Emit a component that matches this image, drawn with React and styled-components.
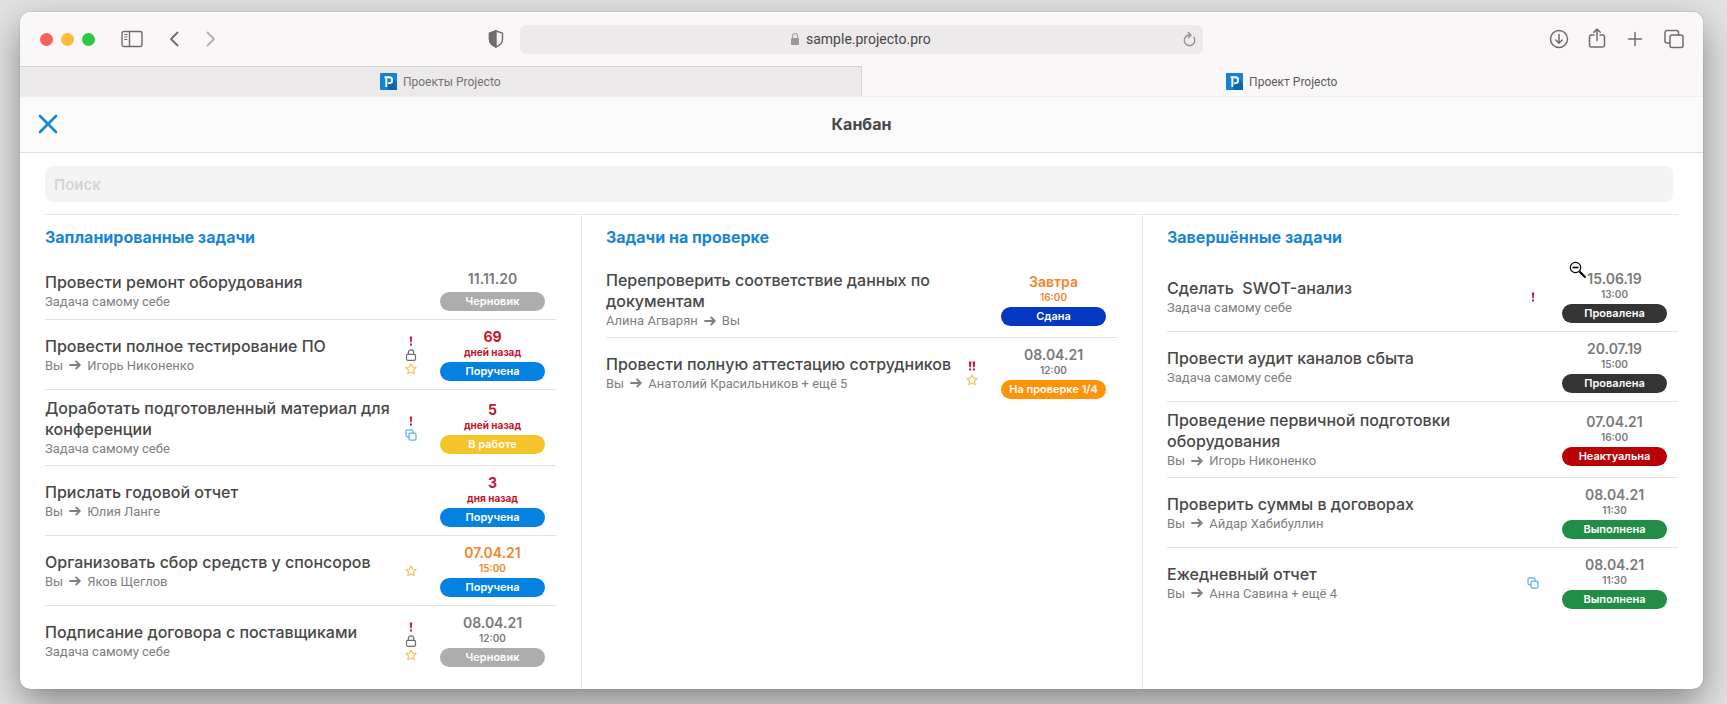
import React from 'react';
import styled, { createGlobalStyle } from 'styled-components';

const GlobalStyle = createGlobalStyle`
  * {
    box-sizing: border-box;
  }

  body {
    margin: 0;
    background-color: #e2e2e2;
    color: #484848;
    font-family: Inter, 'Noto Sans', sans-serif;
  }

  button {
    padding: 0;
    border: none;
    background: none;
    color: inherit;
    font: inherit;
    cursor: pointer;
  }

  svg {
    display: block;
    flex: none;
  }
`;

const Desktop = styled.div`
  display: flex;
  min-height: 100vh;
  padding: 12px 24px 15px 20px;
  overflow: hidden;
`;

const BrowserWindow = styled.div`
  display: flex;
  flex: 1;
  flex-direction: column;
  min-width: 0;
  border-radius: 10px;
  background-color: #fff;
  box-shadow: 0 0 1px rgba(0, 0, 0, 0.4), 0 14px 36px rgba(0, 0, 0, 0.4);
`;

const Toolbar = styled.div`
  display: grid;
  grid-template-columns: 1fr minmax(0, 683px) 1fr;
  align-items: center;
  height: 54px;
  border-radius: 10px 10px 0 0;
  background-color: #faf7f8;
  color: #6e6c6d;
  font-family: Roboto, 'Noto Sans', sans-serif;
`;

const ToolbarLeft = styled.div`
  display: flex;
  align-items: center;
  padding: 0 16px 0 20px;
`;

const TrafficLights = styled.div`
  display: flex;
  gap: 8px;
  margin-right: 26px;
`;

const TrafficLight = styled.button`
  width: 13px;
  height: 13px;
  border-radius: 50%;
  background-color: ${(props) => props.$color};
`;

const NavButtons = styled.div`
  display: flex;
  gap: 19px;
  margin-left: 22px;
`;

const ToolButton = styled.button`
  opacity: ${(props) => (props.disabled ? 0.5 : 1)};
`;

const ShieldButton = styled(ToolButton)`
  margin-left: auto;
`;

const AddressBar = styled.div`
  display: grid;
  grid-template-columns: 1fr auto 1fr;
  align-items: center;
  height: 29px;
  padding: 0 7px;
  border-radius: 6px;
  background-color: #edeaeb;
`;

const Address = styled.label`
  display: flex;
  grid-column: 2;
  align-items: center;
  gap: 6px;
`;

const AddressInput = styled.input`
  width: 127px;
  padding: 0;
  border: none;
  outline: none;
  background: none;
  color: #484647;
  font-family: inherit;
  font-size: 14px;
`;

const ReloadButton = styled(ToolButton)`
  justify-self: end;
  color: #8e8c8d;
`;

const ToolbarRight = styled.div`
  display: flex;
  align-items: center;
  justify-content: flex-end;
  gap: 19px;
  padding-right: 19px;
`;

const TabBar = styled.div`
  display: grid;
  grid-template-columns: 1fr 1fr;
  height: 31px;
  font-family: Roboto, 'Noto Sans', sans-serif;
`;

const Tab = styled.button`
  display: flex;
  align-items: center;
  justify-content: center;
  gap: 6px;
  border-top: 1px solid ${(props) => (props.$active ? '#faf7f8' : '#d3d1d2')};
  border-right: 1px solid ${(props) => (props.$active ? '#faf7f8' : '#d3d1d2')};
  border-bottom: 1px solid #f0eeef;
  background-color: ${(props) => (props.$active ? '#faf7f8' : '#ebe9ea')};
  color: ${(props) => (props.$active ? '#5c5a5b' : '#747273')};
  font-size: 12px;
`;

const PageHeader = styled.header`
  display: grid;
  grid-template-columns: 1fr auto 1fr;
  align-items: center;
  height: 56px;
  padding: 0 18px 2px;
  border-bottom: 1px solid #e0e0e0;
  background-color: #fafafa;
`;

const CloseButton = styled.button`
  justify-self: start;
  color: #1a85d6;
`;

const PageTitle = styled.h1`
  margin: 0;
  font-size: 16px;
  font-weight: 700;
`;

const SearchRow = styled.div`
  margin: 0 25px;
  padding: 13px 5px 12px 0;
  border-bottom: 1px solid #e6e6e6;
`;

const SearchInput = styled.input`
  display: block;
  width: 100%;
  height: 36px;
  padding: 0 9px;
  border: none;
  border-radius: 8px;
  outline: none;
  background-color: #f4f4f4;
  font-family: inherit;
  font-size: 15px;
  font-weight: 600;

  &::placeholder {
    color: #d4d4d4;
    opacity: 1;
  }
`;

const Board = styled.main`
  display: grid;
  flex: 1;
  grid-template-columns: repeat(3, minmax(0, 1fr));
`;

const Column = styled.section`
  padding: 0 25px 12px;

  & + & {
    border-left: 1px solid #e6e6e6;
    padding-left: 24px;
  }
`;

const ColumnTitle = styled.h2`
  margin: 0;
  color: #1a85d6;
  font-size: 16px;
  font-weight: 700;
  line-height: 44px;
`;

const TaskList = styled.ul`
  margin: 3px 0 0;
  padding: 0;
  list-style: none;
`;

const TaskRow = styled.li`
  display: flex;
  align-items: center;
  padding: 8px 11px 8px 0;
  border-bottom: 1px solid #e2e2e2;

  &:last-child {
    border-bottom-color: transparent;
  }
`;

const TaskText = styled.div`
  flex: 1;
  min-width: 0;
`;

const TaskTitle = styled.h3`
  margin: 0;
  font-size: 16px;
  font-weight: 500;
  line-height: 21px;
`;

const TaskPeople = styled.p`
  display: flex;
  align-items: center;
  gap: 6px;
  margin: 0;
  color: #808080;
  font-family: Roboto, 'Noto Sans', sans-serif;
  font-size: 13px;
  line-height: 17px;
`;

const Marks = styled.div`
  display: flex;
  flex-direction: column;
  align-items: center;
  width: 20px;
  margin-right: 19px;
`;

const Due = styled.div`
  display: flex;
  position: relative;
  flex-direction: column;
  align-items: center;
  width: 105px;
  color: ${(props) => props.$color};
`;

const DueDate = styled.span`
  font-size: 14px;
  font-weight: ${(props) => (props.$bold ? 700 : 600)};
  line-height: 18px;
`;

const DueTime = styled.span`
  font-size: 10px;
  font-weight: ${(props) => (props.$bold ? 700 : 600)};
  line-height: 12px;
`;

const Status = styled.span`
  width: 100%;
  margin-top: 4px;
  border-radius: 10px;
  background-color: ${(props) => props.$color};
  color: #fff;
  font-size: 11px;
  font-weight: 600;
  line-height: 19px;
  text-align: center;
`;

const Pointer = styled.div`
  position: absolute;
  top: -9px;
  left: 7px;
`;

const GRAY = '#7a7a7a';
const RED = '#c4152b';
const ORANGE = '#f5842a';

const statuses = {
  draft: ['Черновик', '#adadad'],
  assigned: ['Поручена', '#0482e2'],
  inWork: ['В работе', '#f4c52b'],
  submitted: ['Сдана', '#0437c2'],
  review: ['На проверке 1/4', '#ff9206'],
  failed: ['Провалена', '#343434'],
  outdated: ['Неактуальна', '#b90205'],
  done: ['Выполнена', '#228d46'],
};

const SELF = ['Задача самому себе'];

const columns = [
  {
    title: 'Запланированные задачи',
    tasks: [
      { title: 'Провести ремонт оборудования', people: SELF, marks: [], date: '11.11.20', status: 'draft' },
      { title: 'Провести полное тестирование ПО', people: ['Вы', 'Игорь Никоненко'], marks: ['high', 'lock', 'star'], date: '69', time: 'дней назад', color: RED, status: 'assigned' },
      { title: 'Доработать подготовленный материал для конференции', people: SELF, marks: ['high', 'copy'], date: '5', time: 'дней назад', color: RED, status: 'inWork' },
      { title: 'Прислать годовой отчет', people: ['Вы', 'Юлия Ланге'], marks: [], date: '3', time: 'дня назад', color: RED, status: 'assigned' },
      { title: 'Организовать сбор средств у спонсоров', people: ['Вы', 'Яков Щеглов'], marks: ['star'], date: '07.04.21', time: '15:00', color: ORANGE, status: 'assigned' },
      { title: 'Подписание договора с поставщиками', people: SELF, marks: ['high', 'lock', 'star'], date: '08.04.21', time: '12:00', status: 'draft' },
    ],
  },
  {
    title: 'Задачи на проверке',
    tasks: [
      { title: 'Перепроверить соответствие данных по документам', people: ['Алина Агварян', 'Вы'], marks: [], date: 'Завтра', time: '16:00', color: ORANGE, status: 'submitted' },
      { title: 'Провести полную аттестацию сотрудников', people: ['Вы', 'Анатолий Красильников + ещё 5'], marks: ['urgent', 'star'], date: '08.04.21', time: '12:00', status: 'review' },
    ],
  },
  {
    title: 'Завершённые задачи',
    tasks: [
      { title: 'Сделать \u00a0SWOT-анализ', people: SELF, marks: ['high'], date: '15.06.19', time: '13:00', status: 'failed', pointer: true },
      { title: 'Провести аудит каналов сбыта', people: SELF, marks: [], date: '20.07.19', time: '15:00', status: 'failed' },
      { title: 'Проведение первичной подготовки оборудования', people: ['Вы', 'Игорь Никоненко'], marks: [], date: '07.04.21', time: '16:00', status: 'outdated' },
      { title: 'Проверить суммы в договорах', people: ['Вы', 'Айдар Хабибуллин'], marks: [], date: '08.04.21', time: '11:30', status: 'done' },
      { title: 'Ежедневный отчет', people: ['Вы', 'Анна Савина + ещё 4'], marks: ['copy'], date: '08.04.21', time: '11:30', status: 'done' },
    ],
  },
];

const Icon = ({ width, height, stroke = 1.5, children }) => (
  <svg
    width={width}
    height={height}
    viewBox={`0 0 ${width} ${height}`}
    fill="none"
    stroke="currentColor"
    strokeWidth={stroke}
    strokeLinecap="round"
    strokeLinejoin="round"
    aria-hidden="true"
  >
    {children}
  </svg>
);

const SidebarIcon = () => (
  <Icon width={22} height={18} stroke={1.4}>
    <rect x="1" y="1.5" width="20" height="15" rx="2" />
    <path d="M8.5 1.5v15" />
    <path d="M3.5 4.5h2.5M3.5 7h2.5M3.5 9.5h2.5" strokeWidth="1" />
  </Icon>
);

const ShieldIcon = () => (
  <Icon width={16} height={18} stroke={1.4}>
    <path d="M8 1 14.5 3.2v6.3c0 3.4-3 6-6.5 7.5-3.5-1.5-6.5-4.1-6.5-7.5V3.2z" />
    <path d="M8 1v16C4.5 15.5 1.5 12.9 1.5 9.5V3.2z" fill="currentColor" />
  </Icon>
);

const LockGlyph = () => (
  <svg width="10" height="14" viewBox="0 0 10 14" aria-hidden="true">
    <path d="M2.5 6V4a2.5 2.5 0 0 1 5 0v2" fill="none" stroke="#a19fa0" strokeWidth="1.2" />
    <rect x="1" y="6" width="8" height="7" rx="1" fill="#9a9899" />
  </svg>
);

const ReloadIcon = () => (
  <Icon width={14} height={16} stroke={1.3}>
    <path d="M11.9 6.3A5.3 5.3 0 1 1 7 4h1.5" />
    <path d="M6.3 1.5 9 4 6.3 6.7" />
  </Icon>
);

const DownloadIcon = () => (
  <Icon width={20} height={20}>
    <circle cx="10" cy="10" r="8.5" />
    <path d="M10 5.5v8.5M6.8 11 10 14.2 13.2 11" />
  </Icon>
);

const ShareIcon = () => (
  <Icon width={18} height={22}>
    <path d="M6 7H3.2A1.7 1.7 0 0 0 1.5 8.700v8.600A1.7 1.7 0 0 0 3.2 19h11.600a1.7 1.7 0 0 0 1.7-1.7V8.700A1.7 1.7 0 0 0 14.8 7H12" />
    <path d="M9 12.5V1.300M5.8 4.300 9 1.100l3.2 3.2" />
  </Icon>
);

const PlusIcon = () => (
  <Icon width={20} height={20}>
    <path d="M10 3.5v13M3.5 10h13" />
  </Icon>
);

const TabsIcon = () => (
  <Icon width={20} height={20}>
    <rect x="6" y="6" width="13" height="12.5" rx="2" />
    <path d="M6 14H3a2 2 0 0 1-2-2V3.5a2 2 0 0 1 2-2h9.5a2 2 0 0 1 2 2V6" />
  </Icon>
);

const CloseIcon = () => (
  <Icon width={20} height={20} stroke={2.6}>
    <path d="M2 2 18 18M18 2 2 18" />
  </Icon>
);

const Favicon = () => (
  <svg width="17" height="17" viewBox="0 0 17 17" aria-hidden="true">
    <rect width="17" height="17" rx="1" fill="#1583d2" />
    <path d="M7 14 13 6l4 4v7H8z" fill="#0b66ac" />
    <path d="M6.3 14V4.3M4.5 4.3h4.8a2.9 2.9 0 0 1 0 5.8H8.2" fill="none" stroke="#fff" strokeWidth="1.9" />
  </svg>
);

const ArrowIcon = () => (
  <Icon width={12} height={10} stroke={1.8}>
    <path d="M1 5h9.5M7.2 1.5 10.8 5 7.2 8.5" />
  </Icon>
);

const markIcons = {
  high: (
    <svg width="14" height="14" viewBox="0 0 14 14" role="img" aria-label="Важно">
      <path d="M5.8 2.5h2.4l-.5 5.800H6.300z" fill="#c01f3c" />
      <rect x="6" y="9.500" width="2" height="2" fill="#c01f3c" />
    </svg>
  ),
  urgent: (
    <svg width="14" height="14" viewBox="0 0 14 14" role="img" aria-label="Очень важно">
      <path d="M3.8 2.5h2.6l-.5 5.8H4.3zM7.6 2.5h2.6l-.5 5.8H8.1z" fill="#c01f3c" />
      <path d="M4.1 9.5h2v2h-2zM7.9 9.5h2v2h-2z" fill="#c01f3c" />
    </svg>
  ),
  lock: (
    <svg width="14" height="14" viewBox="0 0 14 14" role="img" aria-label="Приватная" fill="none" stroke="#6c6c6c" strokeWidth="1.2">
      <rect x="2.5" y="6.3" width="9" height="6" rx="1.2" />
      <path d="M4.3 6.3V4.6a2.7 2.7 0 0 1 5.4 0v1.7" />
    </svg>
  ),
  star: (
    <svg width="14" height="14" viewBox="0 0 14 14" role="img" aria-label="Избранное" fill="none" stroke="#f9c266" strokeWidth="1.2" strokeLinejoin="round">
      <path d="m7 1.8 1.5 3.3 3.7.4-2.8 2.5.8 3.7L7 9.9l-3.2 1.8.8-3.700L1.8 5.5l3.7-.4z" />
    </svg>
  ),
  copy: (
    <svg width="14" height="14" viewBox="0 0 14 14" role="img" aria-label="Копия" fill="none" stroke="#58aee6" strokeWidth="1.2">
      <rect x="5" y="5.2" width="7" height="7" rx="1.5" />
      <path d="M5 8.8H3.5a1.5 1.5 0 0 1-1.5-1.5v-4A1.5 1.5 0 0 1 3.5 1.8h4A1.5 1.5 0 0 1 9 3.3v1.9" />
    </svg>
  ),
};

const ZoomPointer = () => (
  <Pointer>
    <svg width="18" height="18" viewBox="0 0 18 18" aria-hidden="true">
      <path d="m10.5 10.5 6 6" stroke="#000" strokeWidth="2.2" />
      <circle cx="6.5" cy="6.5" r="5.2" fill="#fff" stroke="#000" strokeWidth="1.2" />
      <path d="M3.5 6.5h6" stroke="#000" strokeWidth="1.6" />
    </svg>
  </Pointer>
);

const Task = ({ title, people, marks, date, time, color = GRAY, status, pointer }) => {
  const [label, statusColor] = statuses[status];

  return (
    <TaskRow>
      <TaskText>
        <TaskTitle>{title}</TaskTitle>
        <TaskPeople>
          <span>{people[0]}</span>
          {people[1] && <ArrowIcon />}
          {people[1] && <span>{people[1]}</span>}
        </TaskPeople>
      </TaskText>
      <Marks>
        {marks.map((mark) => (
          <React.Fragment key={mark}>{markIcons[mark]}</React.Fragment>
        ))}
      </Marks>
      <Due $color={color}>
        <DueDate $bold={color === RED}>{date}</DueDate>
        {time && <DueTime $bold={color === RED}>{time}</DueTime>}
        <Status $color={statusColor}>{label}</Status>
        {pointer && <ZoomPointer />}
      </Due>
    </TaskRow>
  );
};

const App = () => {
  return (
    <Desktop>
      <GlobalStyle />
      <BrowserWindow>
        <Toolbar>
          <ToolbarLeft>
            <TrafficLights>
              <TrafficLight $color="#f9605c" aria-label="Закрыть окно" />
              <TrafficLight $color="#fbbd36" aria-label="Свернуть" />
              <TrafficLight $color="#2cc840" aria-label="Развернуть" />
            </TrafficLights>
            <ToolButton aria-label="Боковая панель"><SidebarIcon /></ToolButton>
            <NavButtons>
              <ToolButton aria-label="Назад">
                <Icon width={18} height={18} stroke={1.8}><path d="M12.5 2.500 6 9l6.500 6.500" /></Icon>
              </ToolButton>
              <ToolButton aria-label="Вперёд" disabled>
                <Icon width={18} height={18} stroke={1.8}><path d="M5.5 2.500 12 9l-6.500 6.500" /></Icon>
              </ToolButton>
            </NavButtons>
            <ShieldButton aria-label="Защита"><ShieldIcon /></ShieldButton>
          </ToolbarLeft>
          <AddressBar>
            <Address>
              <LockGlyph />
              <AddressInput type="text" defaultValue="sample.projecto.pro" aria-label="Адрес" />
            </Address>
            <ReloadButton aria-label="Обновить"><ReloadIcon /></ReloadButton>
          </AddressBar>
          <ToolbarRight>
            <ToolButton aria-label="Загрузки"><DownloadIcon /></ToolButton>
            <ToolButton aria-label="Поделиться"><ShareIcon /></ToolButton>
            <ToolButton aria-label="Новая вкладка"><PlusIcon /></ToolButton>
            <ToolButton aria-label="Все вкладки"><TabsIcon /></ToolButton>
          </ToolbarRight>
        </Toolbar>
        <TabBar>
          <Tab><Favicon />Проекты Projecto</Tab>
          <Tab $active><Favicon />Проект Projecto</Tab>
        </TabBar>
        <PageHeader>
          <CloseButton aria-label="Закрыть"><CloseIcon /></CloseButton>
          <PageTitle>Канбан</PageTitle>
        </PageHeader>
        <SearchRow>
          <SearchInput type="search" placeholder="Поиск" aria-label="Поиск" />
        </SearchRow>
        <Board>
          {columns.map((column) => (
            <Column key={column.title}>
              <ColumnTitle>{column.title}</ColumnTitle>
              <TaskList>
                {column.tasks.map((task) => (
                  <Task key={task.title} {...task} />
                ))}
              </TaskList>
            </Column>
          ))}
        </Board>
      </BrowserWindow>
    </Desktop>
  );
};

export default App;
